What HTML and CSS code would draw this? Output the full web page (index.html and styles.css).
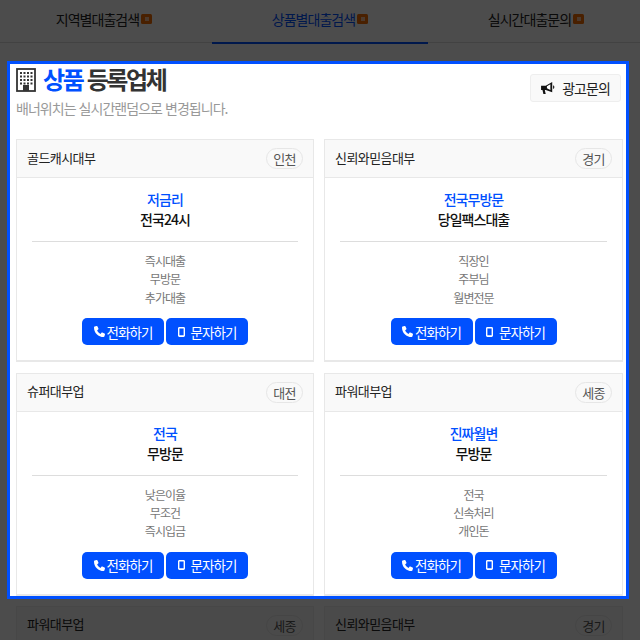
FILE: index.html
```html
<!DOCTYPE html>
<html lang="ko">
<head>
<meta charset="utf-8">
<title>상품 등록업체</title>
<link rel="stylesheet" href="styles.css">
</head>
<body>
<svg class="defs" width="0" height="0">
  <symbol id="i-phone" viewBox="0 0 512 512"><path fill="currentColor" d="M164.900 24.600c-7.700-18.600-28-28.500-47.400-23.200l-88 24C12.100 30.200 0 46 0 64C0 311.400 200.600 512 448 512c18 0 33.800-12.100 38.600-29.500l24-88c5.300-19.400-4.600-39.700-23.200-47.400l-96-40c-16.300-6.800-35.200-2.100-46.300 11.600L304.700 368C234.300 334.700 177.300 277.700 144 207.300L193.300 167c13.700-11.200 18.400-30 11.600-46.300l-40-96z"/></symbol>
  <symbol id="i-mobile" viewBox="0 0 10 14"><path fill="currentColor" fill-rule="evenodd" d="M2 0h6c1.100 0 2 .9 2 2v10c0 1.100-.9 2-2 2H2c-1.100 0-2-.9-2-2V2C0 .9.900 0 2 0zM2 2v9.500h6V2z"/></symbol>
</svg>

<div class="page">
  <nav class="tabs">
    <a class="tab">지역별대출검색<i class="new"></i></a>
    <a class="tab tab-on">상품별대출검색<i class="new"></i></a>
    <a class="tab">실시간대출문의<i class="new"></i></a>
  </nav>
  <div class="under-grid">
    <div class="under-card"><span class="name">파워대부업</span><span class="area">세종</span></div>
    <div class="under-card"><span class="name">신뢰와믿음대부</span><span class="area">경기</span></div>
  </div>
</div>

<div class="overlay"></div>

<section class="modal">
  <header class="modal-head">
    <div>
      <h1 class="title">
        <svg class="title-icon" viewBox="0 0 20 24" width="20" height="24">
          <rect x="1" y="1" width="18" height="22" fill="none" stroke="#333" stroke-width="1.800"/>
          <path fill="#333" d="M4 4h2v2H4zM7.500 4h2v2h-2zM11 4h2v2h-2zM14.500 4h2v2h-2zM4 7.500h2v2H4zM7.500 7.500h2v2h-2zM11 7.500h2v2h-2zM14.500 7.500h2v2h-2zM4 11h2v2H4zM7.500 11h2v2h-2zM11 11h2v2h-2zM14.500 11h2v2h-2zM4 14.500h2v2H4zM14.500 14.500h2v2h-2zM7 17h6v6H7z"/>
          <path fill="#333" d="M7.500 14.500h2v2h-2zM11 14.500h2v2h-2z"/>
        </svg>
        <span class="title-text"><span class="blue">상품</span> 등록업체</span>
      </h1>
      <p class="sub">배너위치는 실시간랜덤으로 변경됩니다.</p>
    </div>
    <a class="ad-btn">
      <svg class="horn" viewBox="0 0 16 14" width="15" height="13"><path fill="#111" d="M0 4h5l7-4v11L5 8.500H4l1 4.500H2.500L1.500 8.500H0z"/><path fill="#fff" d="M10 2.500L6.300 4.700v1.900L10 8.700z"/><path fill="#111" d="M13 3.500c1.800.6 1.800 3.400 0 4z"/></svg>
      광고문의
    </a>
  </header>

  <div class="grid">
    <article class="card">
      <div class="card-head"><span class="name">골드캐시대부</span><span class="area">인천</span></div>
      <div class="card-body">
        <strong class="hl">저금리</strong>
        <strong class="main">전국24시</strong>
        <hr class="rule">
        <ul class="feat"><li>즉시대출</li><li>무방문</li><li>추가대출</li></ul>
        <div class="btns">
          <a class="btn"><svg class="ic-phone"><use href="#i-phone"/></svg>전화하기</a>
          <a class="btn"><svg class="ic-mobile"><use href="#i-mobile"/></svg>문자하기</a>
        </div>
      </div>
    </article>
    <article class="card">
      <div class="card-head"><span class="name">신뢰와믿음대부</span><span class="area">경기</span></div>
      <div class="card-body">
        <strong class="hl">전국무방문</strong>
        <strong class="main">당일팩스대출</strong>
        <hr class="rule">
        <ul class="feat"><li>직장인</li><li>주부님</li><li>월변전문</li></ul>
        <div class="btns">
          <a class="btn"><svg class="ic-phone"><use href="#i-phone"/></svg>전화하기</a>
          <a class="btn"><svg class="ic-mobile"><use href="#i-mobile"/></svg>문자하기</a>
        </div>
      </div>
    </article>
    <article class="card">
      <div class="card-head"><span class="name">슈퍼대부업</span><span class="area">대전</span></div>
      <div class="card-body">
        <strong class="hl">전국</strong>
        <strong class="main">무방문</strong>
        <hr class="rule">
        <ul class="feat"><li>낮은이율</li><li>무조건</li><li>즉시입금</li></ul>
        <div class="btns">
          <a class="btn"><svg class="ic-phone"><use href="#i-phone"/></svg>전화하기</a>
          <a class="btn"><svg class="ic-mobile"><use href="#i-mobile"/></svg>문자하기</a>
        </div>
      </div>
    </article>
    <article class="card">
      <div class="card-head"><span class="name">파워대부업</span><span class="area">세종</span></div>
      <div class="card-body">
        <strong class="hl">진짜월변</strong>
        <strong class="main">무방문</strong>
        <hr class="rule">
        <ul class="feat"><li>전국</li><li>신속처리</li><li>개인돈</li></ul>
        <div class="btns">
          <a class="btn"><svg class="ic-phone"><use href="#i-phone"/></svg>전화하기</a>
          <a class="btn"><svg class="ic-mobile"><use href="#i-mobile"/></svg>문자하기</a>
        </div>
      </div>
    </article>
  </div>
</section>
</body>
</html>
```
FILE: styles.css
```css
* { box-sizing: border-box; }
html, body { margin: 0; padding: 0; height: 640px; overflow: hidden; background: #fff; }
body {
  font-family: "Noto Sans CJK KR", "Noto Sans", sans-serif;
  color: #222;
  letter-spacing: -0.06em;
  position: relative;
}
.defs { position: absolute; }
a { text-decoration: none; color: inherit; }

.page { height: 640px; }
.tabs { display: flex; height: 43px; margin: 0 -4px; border-bottom: 1px solid #ddd; }
.tab {
  flex: 1;
  display: flex;
  justify-content: center;
  align-items: center;
  gap: 2px;
  font-size: 14px;
  height: 43px;
  padding-bottom: 5px;
  color: #222;
}
.tab-on { color: #0050ff; border-bottom: 2px solid #0050ff; height: 44px; }
.new { width: 11px; height: 10px; background: #f56d00; border-radius: 1.500px; display: flex; align-items: center; justify-content: center; }
.new::after { content: ""; width: 4px; height: 4px; background: #fff; opacity: .6; }

.under-grid { display: grid; grid-template-columns: 298px 299px; gap: 10px; margin: 563px 0 0 16px; }
.under-card { display: flex; justify-content: space-between; align-items: center; height: 38px; padding: 0 10px; background: #f9f9f9; border: 1px solid #eee; }

.overlay { position: absolute; inset: 0; background: rgba(0, 0, 0, .7); }

.modal {
  position: absolute;
  left: 7px; top: 61px;
  width: 622px; height: 538px;
  background: #fff;
  border: 3px solid #0050ff;
  overflow: hidden;
  padding: 0 3px 0 6px;
}
.modal-head { display: flex; justify-content: space-between; align-items: flex-start; height: 75px; }
.title { margin: 0; display: flex; align-items: center; font-size: 24px; font-weight: 700; line-height: 30px; height: 32px; padding-bottom: 2px; color: #333; letter-spacing: -0.1em; }
.title-icon { margin: 2px 7px 0 0; }
.title-text { white-space: nowrap; }
.blue { color: #0050ff; }
.sub { margin: 1px 0 0; font-size: 14px; line-height: 22px; color: #999; }
.ad-btn { display: flex; align-items: center; justify-content: center; gap: 6px; width: 91px; height: 28px; margin: 10px 2px 0 0; background: #f9f9f9; border: 1px solid #eee; border-radius: 3px; font-size: 14px; color: #222; }

.grid { display: grid; grid-template-columns: 298px 299px; gap: 10.500px 10px; }
.card { border: 1px solid #e8e8e8; border-bottom-width: 2px; height: 223px; background: #fff; }
.card-head { display: flex; justify-content: space-between; align-items: center; height: 38px; padding: 0 10px; background: #f9f9f9; border-bottom: 1px solid #e8e8e8; }
.name { font-size: 13px; color: #222; letter-spacing: -0.045em; padding-bottom: 3px; }
.area { display: flex; align-items: center; justify-content: center; width: 37px; height: 21px; border: 1px solid #e6e6e6; border-radius: 11px; background: #f9f9f9; font-size: 13px; font-weight: 400; color: #555; letter-spacing: -0.06em; }
.card-body { display: flex; flex-direction: column; align-items: center; padding: 11px 15px 0; }
.hl { font-size: 14px; font-weight: 500; line-height: 20px; color: #0050ff; }
.main { font-size: 14px; font-weight: 500; line-height: 20px; color: #111; }
.rule { width: 100%; margin: 12px 0 10px; border: 0; border-top: 1px solid #ddd; }
.feat { list-style: none; margin: 0; padding: 0; text-align: center; font-size: 12px; line-height: 18.400px; color: #777; }
.btns { display: flex; gap: 2px; margin-top: 11px; }
.btn { display: flex; align-items: center; justify-content: center; gap: 2px; width: 82px; height: 27px; background: #0050ff; border-radius: 5px; color: #fff; font-size: 13.500px; letter-spacing: -0.07em; }
.ic-phone { width: 11px; height: 11px; }
.ic-mobile { width: 7px; height: 10px; margin-right: 4px; }
```
